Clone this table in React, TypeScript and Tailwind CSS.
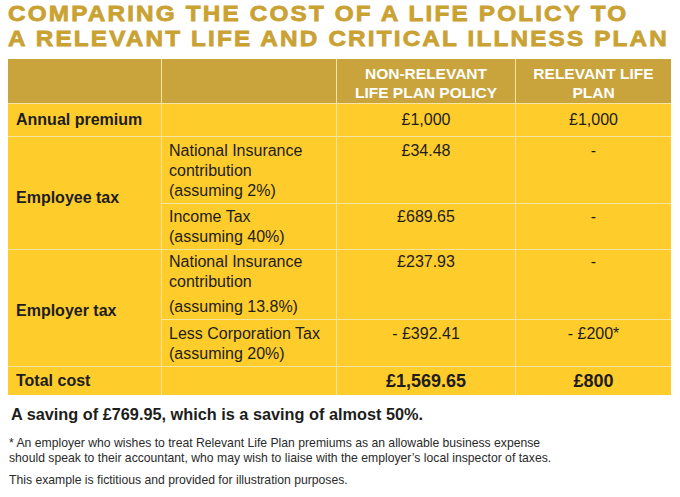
import React from "react";

const font = { fontFamily: '"Liberation Sans", Arial, sans-serif' };

function Cell({ className = "", children }: { className?: string; children?: React.ReactNode }) {
  return <div className={`bg-[#fecc2b] text-[#1d1d1b] ${className}`}>{children}</div>;
}

export default function App() {
  return (
    <div className="w-[680px] h-[497px] bg-white overflow-hidden" style={font}>
      <h1 className="ml-[8px] pt-[1px] w-max origin-left scale-x-[1.08] text-[22.5px] leading-[25px] font-bold tracking-[2px] text-[#caa233] [-webkit-text-stroke:0.8px_#caa233]">
        <div>COMPARING THE COST OF A LIFE POLICY TO</div>
        <div>A RELEVANT LIFE AND CRITICAL ILLNESS PLAN</div>
      </h1>

      <div className="ml-[8px] mt-[8px] w-[663px] grid grid-cols-[153px_174px_178px_155px] grid-rows-[44px_32px_66px_45px_69px_46px_28px] gap-px bg-[#f6e4a2] text-[16px]">
        <div className="bg-[#c9a43c]" />
        <div className="bg-[#c9a43c]" />
        <div className="bg-[#c9a43c] text-white font-bold text-[15.5px] leading-[19px] flex items-center justify-center text-center pt-[3px]">
          NON-RELEVANT
          <br />
          LIFE PLAN POLICY
        </div>
        <div className="bg-[#c9a43c] text-white font-bold text-[15.5px] leading-[19px] flex items-center justify-center text-center pt-[3px]">
          RELEVANT LIFE
          <br />
          PLAN
        </div>

        <Cell className="font-bold pl-[8px] flex items-center">Annual premium</Cell>
        <Cell />
        <Cell className="flex items-center justify-center">£1,000</Cell>
        <Cell className="flex items-center justify-center">£1,000</Cell>

        <Cell className="row-span-2 font-bold pl-[8px] flex items-center pt-[10px]">Employee tax</Cell>
        <Cell className="pl-[7px] pt-[4px] leading-[20px]">
          National Insurance
          <br />
          contribution
          <br />
          (assuming 2%)
        </Cell>
        <Cell className="text-center pt-[4px] leading-[20px]">£34.48</Cell>
        <Cell className="text-center pt-[4px] leading-[20px]">-</Cell>

        <Cell className="pl-[7px] pt-[3px] leading-[20px]">
          Income Tax
          <br />
          (assuming 40%)
        </Cell>
        <Cell className="text-center pt-[3px] leading-[20px]">£689.65</Cell>
        <Cell className="text-center pt-[3px] leading-[20px]">-</Cell>

        <Cell className="row-span-2 font-bold pl-[8px] flex items-center pt-[6px]">Employer tax</Cell>
        <Cell className="pl-[7px] pt-[2px] leading-[20px]">
          National Insurance
          <br />
          contribution
          <div className="mt-[5px]">(assuming 13.8%)</div>
        </Cell>
        <Cell className="text-center pt-[2px] leading-[20px]">£237.93</Cell>
        <Cell className="text-center pt-[2px] leading-[20px]">-</Cell>

        <Cell className="pl-[7px] pt-[4px] leading-[20px]">
          Less Corporation Tax
          <br />
          (assuming 20%)
        </Cell>
        <Cell className="text-center pt-[4px] leading-[20px]">- £392.41</Cell>
        <Cell className="text-center pt-[4px] leading-[20px]">- £200*</Cell>

        <Cell className="font-bold pl-[8px] flex items-center">Total cost</Cell>
        <Cell />
        <Cell className="font-bold text-[18px] flex items-center justify-center">£1,569.65</Cell>
        <Cell className="font-bold text-[18px] flex items-center justify-center">£800</Cell>
      </div>

      <p className="pl-[11px] mt-[9px] text-[16.3px] leading-[20px] font-bold text-[#1d1d1b]">
        A saving of £769.95, which is a saving of almost 50%.
      </p>
      <p className="pl-[9px] mt-[12px] text-[12.2px] leading-[15px] text-[#2a2a2a]">
        * An employer who wishes to treat Relevant Life Plan premiums as an allowable business expense
        <br />
        should speak to their accountant, who may wish to liaise with the employer’s local inspector of taxes.
      </p>
      <p className="pl-[9px] mt-[7px] text-[12.2px] leading-[15px] text-[#2a2a2a]">
        This example is fictitious and provided for illustration purposes.
      </p>
    </div>
  );
}
